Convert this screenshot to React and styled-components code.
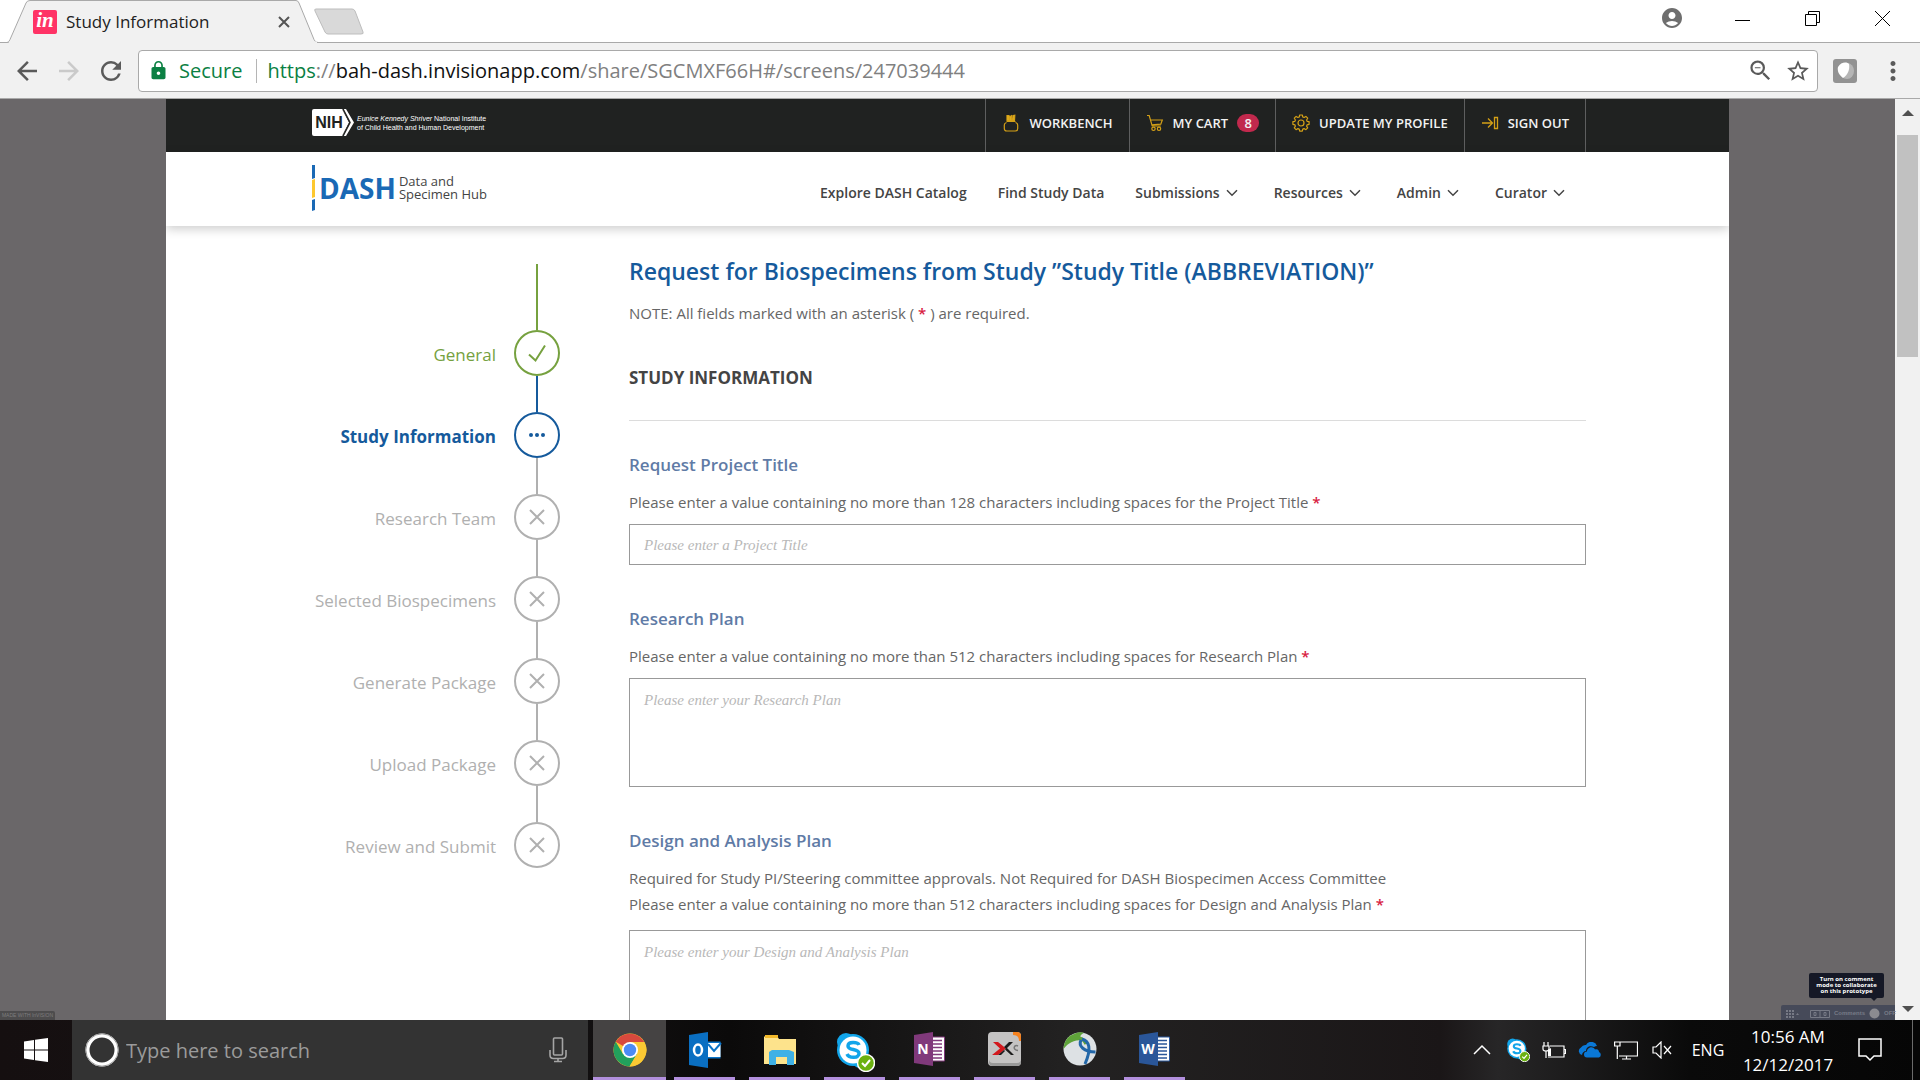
import React, { useState } from 'react';
import styled, { createGlobalStyle } from 'styled-components';
import {
    MdArrowBack,
    MdArrowForward,
    MdRefresh,
    MdLock,
    MdAccountCircle,
    MdZoomOut,
    MdStarBorder,
    MdMoreVert,
} from 'react-icons/md';

const GlobalStyle = createGlobalStyle`
    * {
        box-sizing: border-box;
    }

    body {
        margin: 0;
        font-family: 'Open Sans', 'Noto Sans', sans-serif;
        overflow: hidden;
    }

    button, input, textarea {
        font-family: inherit;
        font-size: inherit;
        color: inherit;
        border: none;
        background: transparent;
        padding: 0;
    }

    a {
        color: inherit;
        text-decoration: none;
    }

    h1, h2, h3, p, ol {
        margin: 0;
        padding: 0;
    }

    svg {
        display: block;
        flex: none;
    }
`;

const Desktop = styled.div`
    display: flex;
    flex-direction: column;
    height: 100vh;
`;

/* ---------- browser ---------- */

const TabStrip = styled.div`
    display: flex;
    justify-content: space-between;
    height: 43px;
    background: #fff;
    border-bottom: 1px solid #a9a9a9;
`;

const Tabs = styled.div`
    display: flex;
    height: 43px;
`;

const Tab = styled.div`
    position: relative;
    z-index: 0;
    display: flex;
    align-items: center;
    width: 314px;
    padding: 0 24px 0 33px;
    font-size: 17px;
    color: #222;
    gap: 9px;
`;

const TabShape = styled.svg`
    position: absolute;
    left: 0;
    top: 0;
    z-index: -1;
`;

const TabTitle = styled.span`
    flex: 1;
    white-space: nowrap;
`;

const Favicon = styled.span`
    width: 24px;
    height: 24px;
    border-radius: 2px;
    background: #ff3366;
    color: #fff;
    font: italic 700 21px/21px 'Liberation Serif', serif;
    text-align: center;
`;

const NewTab = styled.button`
    width: 52px;
    height: 43px;
`;

const WindowButtons = styled.div`
    display: flex;
    height: 42px;
    padding: 0 3px 6px 0;

    button {
        display: flex;
        justify-content: center;
        align-items: center;
        width: 70px;
    }
`;

const Toolbar = styled.div`
    display: flex;
    align-items: center;
    height: 56px;
    padding: 0 12px;
    background: #f1f1f1;
    border-bottom: 1px solid #a9a9a9;
    color: #5a5a5a;
`;

const ToolGroup = styled.div`
    display: flex;
    gap: ${(props) => props.$gap};
`;

const ToolButton = styled.button`
    display: flex;
    justify-content: center;
    align-items: center;
    width: 30px;
    opacity: ${(props) => (props.$dim ? 0.25 : 1)};
`;

const Omnibox = styled.div`
    display: flex;
    align-items: center;
    flex: 1;
    height: 42px;
    margin: 0 12px;
    padding: 0 1px 0 9px;
    border: 1px solid #a9a9a9;
    border-radius: 4px;
    background: #fff;
    font-size: 20px;
    color: #0b8043;
`;

const Secure = styled.span`
    margin-left: 10px;
    padding-right: 14px;
    border-right: 1px solid #b5b5b5;
    line-height: 24px;
`;

const Address = styled.span`
    flex: 1;
    padding-left: 10px;
    color: #808080;
    white-space: nowrap;

    i {
        font-style: normal;
        color: #0b8043;
    }

    b {
        font-weight: 400;
        color: #111;
    }
`;

const OmniButton = styled.button`
    display: flex;
    justify-content: center;
    width: 37px;
    color: #5a5a5a;
`;

const Viewport = styled.div`
    position: relative;
    display: flex;
    flex: 1;
    min-height: 0;
    background: #6a6769;
    overflow: hidden;
`;

const Canvas = styled.div`
    flex: 1;
    min-width: 0;
`;

const Scrollbar = styled.div`
    display: flex;
    flex-direction: column;
    align-items: center;
    width: 25px;
    padding: 11px 0 8px;
    background: #f1f1f1;
`;

const Thumb = styled.div`
    width: 21px;
    height: 222px;
    margin-top: 19px;
    margin-bottom: auto;
    background: #c1c1c1;
`;

/* ---------- DASH page ---------- */

const Page = styled.div`
    width: 100%;
    max-width: 1563px;
    height: 100%;
    margin: 0 auto;
    background: #fff;
    overflow: hidden;
`;

const Inner = styled.div`
    display: flex;
    width: 100%;
    max-width: 1277px;
    margin: 0 auto;
    justify-content: space-between;
`;

const TopBar = styled.header`
    background: #202221;
`;

const NihLogo = styled.a`
    display: flex;
    gap: 3px;
    padding: 10px 0 0 3px;
    color: #fff;
    font: 7px/9px 'Liberation Sans', sans-serif;
    white-space: nowrap;

    span {
        padding-top: 5px;
    }
`;

const TopLinks = styled.nav`
    display: flex;
    border-right: 1px solid #5e5f5f;
`;

const TopLink = styled.a`
    display: flex;
    align-items: center;
    gap: 9px;
    height: 53px;
    padding: 0 16px 6px;
    border-left: 1px solid #5e5f5f;
    font-size: 13px;
    font-weight: 600;
    color: #f2f2f2;
`;

const CartCount = styled.span`
    width: 22px;
    border-radius: 9px;
    background: #c1294d;
    line-height: 18px;
    text-align: center;
`;

const MainBar = styled.div`
    position: relative;
    background: #fff;
    box-shadow: 0 3px 10px rgba(0, 0, 0, 0.2);
`;

const DashLogo = styled.a`
    display: flex;
    align-items: center;
    gap: 3px;
    height: 74px;
    padding: 0 0 3px 3px;
    color: #444;
    font-size: 13px;
    line-height: 13px;

    strong {
        font-size: 28px;
        line-height: 28px;
        color: #1a69b5;
    }
`;

const MainNav = styled.nav`
    display: flex;
    align-items: center;
    gap: 31px;
    padding: 7px 16px 0 0;
`;

const NavLink = styled.a`
    display: flex;
    align-items: center;
    gap: 6px;
    font-size: 14px;
    font-weight: 600;
    color: #444;

    svg {
        margin-right: 5px;
    }
`;

const Content = styled(Inner)`
    gap: 69px;
`;

const Steps = styled.ol`
    width: 251px;
    padding-top: 38px;
    list-style: none;
`;

const stepColors = {
    done: '#76a13f',
    current: '#155a9c',
    todo: '#b0b0b0',
};

const Step = styled.li`
    display: grid;
    grid-template-columns: 1fr 46px;
    column-gap: 18px;
    align-items: center;
    justify-items: center;
    color: ${(props) => stepColors[props.$state]};

    &::before {
        content: '';
        grid-column: 2;
        width: 2px;
        height: ${(props) => (props.$first ? '66px' : '36px')};
        background: currentColor;
    }

    a {
        grid-column: 1;
        justify-self: end;
        padding-top: 2px;
        font-size: 17px;
        font-weight: ${(props) => (props.$state === 'current' ? 700 : 400)};
        white-space: nowrap;
    }
`;

const Form = styled.form`
    flex: 1;
    min-width: 0;
    padding-top: 28px;
`;

const Title = styled.h1`
    font-size: 23px;
    font-weight: 600;
    line-height: 34px;
    color: #155a9c;
`;

const Hint = styled.p`
    font-size: 15px;
    line-height: 26px;
    color: #666;

    em {
        font-style: normal;
        font-weight: 600;
        color: #d8203f;
    }
`;

const Note = styled(Hint)`
    margin-top: 12px;
`;

const SectionTitle = styled.h2`
    margin: 40px 0 32px;
    padding-bottom: 30px;
    border-bottom: 1px solid #dcdcdc;
    font-size: 17px;
    line-height: 24px;
    color: #444;
`;

const Field = styled.div`
    margin-bottom: 42px;

    label {
        display: block;
        margin-bottom: 12px;
        font-size: 17px;
        font-weight: 600;
        line-height: 24px;
        color: #5f7ba6;
    }

    ${Hint} + ${Hint} {
        padding-bottom: 4px;
    }

    input, textarea {
        display: block;
        width: 100%;
        height: 41px;
        margin-top: 9px;
        padding: 2px 14px 0;
        border: 1px solid #999;
        border-radius: 0;
        outline: none;
        resize: none;
        font-family: 'Liberation Serif', serif;
        font-size: 15px;
        color: #444;

        &::placeholder {
            font-style: italic;
            color: #b8b8b8;
        }
    }

    textarea {
        height: 109px;
        padding: 13px 14px;
    }
`;

const MadeWith = styled.div`
    position: absolute;
    left: 0;
    bottom: 0;
    width: 55px;
    border-radius: 0 2px 0 0;
    background: #4d4c4d;
    color: #7f7e7f;
    font: 5px/9px 'Liberation Sans', sans-serif;
    text-align: center;
`;

const Collaborate = styled.div`
    position: absolute;
    right: 25px;
    bottom: 0;
    display: flex;
    flex-direction: column;
    align-items: flex-end;
`;

const Tooltip = styled.div`
    position: relative;
    width: 75px;
    margin: 0 11px 7px 0;
    padding: 3px 4px 4px;
    border-radius: 2px;
    background: #151826;
    color: #fff;
    font: 700 6px/6px 'Open Sans', sans-serif;
    text-align: center;

    &::after {
        content: '';
        position: absolute;
        right: 7px;
        top: 100%;
        border: 3px solid transparent;
        border-top-color: #151826;
    }
`;

const CommentBar = styled.div`
    display: flex;
    align-items: center;
    gap: 4px;
    width: 114px;
    height: 15px;
    padding: 2px 5px 0;
    border-radius: 2px 0 0 0;
    background: #464a59;
    color: #777a86;
    font: 700 6px/9px 'Liberation Sans', sans-serif;
`;

/* ---------- taskbar ---------- */

const Taskbar = styled.footer`
    display: flex;
    height: 60px;
    background: linear-gradient(90deg, #150f10, #171415 25%, #0b0a0a 38%, #232222 56%, #1a1617 75%, #272627 78%, #0a0a0a 88%, #060606);
    color: #fff;
`;

const Start = styled.button`
    display: flex;
    align-items: center;
    width: 72px;
    padding-left: 24px;
`;

const Search = styled.label`
    display: flex;
    align-items: center;
    gap: 7px;
    width: 516px;
    padding: 0 21px 0 13px;
    background: #333;
    font-size: 20px;

    input {
        flex: 1;
        outline: none;
    }

    input::placeholder {
        color: #9b9b9b;
        opacity: 1;
    }
`;

const Apps = styled.div`
    display: flex;
    gap: 2px;
    margin-left: 5px;
`;

const AppButton = styled.button`
    display: flex;
    flex-direction: column;
    align-items: center;
    justify-content: space-between;
    width: 73px;
    padding-top: 12px;
    background: ${(props) => (props.$active ? '#454343' : 'transparent')};

    &::after {
        content: '';
        width: ${(props) => (props.$active ? '73px' : '61px')};
        height: 3px;
        background: #b28fdd;
    }
`;

const Tray = styled.div`
    display: flex;
    align-items: center;
    margin-left: auto;
    padding-right: 7px;
    font-size: 17px;

    button {
        display: flex;
        justify-content: center;
        width: 36px;
    }
`;

const Language = styled.span`
    width: 56px;
    text-align: center;
    font-size: 16px;
`;

const Clock = styled.time`
    width: 104px;
    margin-right: 12px;
    padding-top: 2px;
    line-height: 28px;
    text-align: center;
`;

const ShowDesktop = styled.span`
    width: 1px;
    height: 60px;
    margin-left: 24px;
    background: #6b6b6b;
`;

/* ---------- icons ---------- */

const gold = '#d4a017';

const JarIcon = () => (
    <svg width="18" height="18" viewBox="0 0 18 18" fill="none" stroke={gold} strokeWidth="1.2">
        <path d="M5 1.500h2v5H5zM8 2.500l1.500-.8.5 4.800H8zM11 1.500l1.800-.3-.3 5.300H11z" fill="#e8b923" />
        <path d="M4.500 7.500h9M4.500 8.500C2.800 9 2.300 9.600 2.300 11v3.500c0 1.700.8 2.500 2.500 2.500h8.400c1.700 0 2.500-.8 2.500-2.500V11c0-1.400-.5-2-2.200-2.500" />
    </svg>
);

const CartIcon = () => (
    <svg width="18" height="18" viewBox="0 0 18 18" fill="none" stroke={gold} strokeWidth="1.200">
        <path d="M1 1.500h2.200L6.200 12h8.600M4.500 6h11.800l-1.500 4.200-9 .6" />
        <circle cx="7.500" cy="14.800" r="1.700" />
        <circle cx="13" cy="14.800" r="1.700" />
    </svg>
);

const GearIcon = () => (
    <svg width="18" height="18" viewBox="0 0 18 18" fill="none" stroke={gold} strokeWidth="1.200" strokeLinejoin="round">
        <path d="M7.700 1h2.600l.5 2 1.300.5 1.800-1.100 1.800 1.800-1.100 1.800.5 1.300 2 .4v2.600l-2 .5-.5 1.300 1.100 1.800-1.800 1.800-1.800-1.100-1.300.5-.5 2H7.700l-.5-2-1.300-.5-1.800 1.100-1.800-1.800 1.100-1.800-.5-1.300-2-.5V7.700l2-.4.5-1.300-1.100-1.800 1.800-1.800 1.800 1.100 1.300-.5z" />
        <circle cx="9" cy="9" r="3" />
    </svg>
);

const SignOutIcon = () => (
    <svg width="18" height="18" viewBox="0 0 18 18" fill="none" stroke={gold} strokeWidth="1.300">
        <path d="M1 9h10M7 4.500L11.500 9 7 13.500M13.500 3.500h3v11h-3z" />
    </svg>
);

const Chevron = () => (
    <svg width="12" height="8" viewBox="0 0 12 8" fill="none" stroke="#444" strokeWidth="1.500">
        <path d="M1 1.200l5 5 5-5" />
    </svg>
);

const StepIcon = ({ state }) => (
    <svg width="46" height="46" viewBox="0 0 46 46" fill="none" stroke="currentColor" strokeWidth="2">
        <circle cx="23" cy="23" r="22" />
        {state === 'done' && <path d="M15 24.500l6.500 6L31 15.500" />}
        {state === 'current' && (
            <g fill="currentColor" stroke="none">
                <circle cx="17" cy="23" r="2" />
                <circle cx="23" cy="23" r="2" />
                <circle cx="29" cy="23" r="2" />
            </g>
        )}
        {state === 'todo' && <path d="M16 16l14 14M30 16L16 30" />}
    </svg>
);

const ChromeIcon = () => (
    <svg width="34" height="36" viewBox="0 0 34 36">
        <circle cx="17" cy="18" r="16.500" fill="#fbc933" />
        <path d="M17 18L2.700 9.800A16.500 16.500 0 0 1 31.300 10z" fill="#d8493d" />
        <path d="M2.700 9.800A16.500 16.500 0 0 0 16.500 34.500L24 22 10 22z" fill="#22a05c" />
        <path d="M17 10h14.300A16.500 16.500 0 0 1 16.500 34.500L24 22z" fill="#fbc933" />
        <circle cx="17" cy="18" r="8" fill="#fff" />
        <circle cx="17" cy="18" r="6.200" fill="#4c8bf5" />
    </svg>
);

const iconText = {
    fill: '#fff',
    fontFamily: "'Open Sans', sans-serif",
    fontWeight: 700,
    textAnchor: 'middle',
};

const OutlookIcon = () => (
    <svg width="34" height="36" viewBox="0 0 34 36">
        <path d="M17 9.500h15.500v17H17z" fill="#0a74c9" />
        <path d="M20 11h12.500v14H20z" fill="#fff" />
        <path d="M20 12l6 7 7-8" fill="none" stroke="#0a74c9" strokeWidth="2" />
        <path d="M1 3l19-3v36L1 33z" fill="#0a6fc2" />
        <ellipse cx="10" cy="18" rx="4" ry="5.500" fill="none" stroke="#fff" strokeWidth="2.500" />
    </svg>
);

const FolderIcon = () => (
    <svg width="34" height="36" viewBox="0 0 34 36">
        <path d="M1 5l1-1h12l2 3h17v25H1z" fill="#fde38c" />
        <path d="M2 3h13v3H2z" fill="#f2b92b" />
        <path d="M6 33V20l3-2h17l5 2v13h-7v-8H13v8z" fill="#3fb1e6" />
    </svg>
);

const SkypeIcon = ({ size = 40 }) => (
    <svg width={size} height={size} viewBox="0 0 40 40">
        <circle cx="11" cy="10" r="9" fill="#12a5ea" />
        <circle cx="25" cy="27" r="9" fill="#12a5ea" />
        <circle cx="18" cy="18" r="16" fill="#12a5ea" />
        <circle cx="18" cy="18" r="13.500" fill="#fff" />
        <path d="M24 13c-1-3-11-4-11 1 0 5 11 2 11 7.500 0 5-10 5-12 .5" fill="none" stroke="#12a5ea" strokeWidth="3.500" />
        <circle cx="31" cy="31" r="8.500" fill="#6bb110" stroke="#fff" strokeWidth="1.500" />
        <path d="M27 31l3 3 5-6" fill="none" stroke="#fff" strokeWidth="2" />
    </svg>
);

const OfficeIcon = ({ letter, color }) => (
    <svg width="34" height="36" viewBox="0 0 34 36">
        <path d="M18 5h13.500v24H18z" fill="#fff" stroke={color} />
        <path d="M20 8.500h9M20 12h9M20 15.500h9M20 19h9M20 22.500h9M20 26h9" stroke={color} strokeWidth="1.600" />
        <path d="M1 3l19-3v34L1 31z" fill={color} />
        <text x="10" y="22" fontSize="14" {...iconText}>{letter}</text>
    </svg>
);

const XcIcon = () => (
    <svg width="34" height="36" viewBox="0 0 34 36">
        <rect x="0" y="0" width="33" height="34" rx="4" fill="#c4c3c3" />
        <path d="M1 30q0 4 4 4h24q4 0 4-4v-3q0 4-4 4H5q-4 0-4-4z" fill="#999" />
        <path d="M25 0h4a4 4 0 0 1 4 4v5h-2c0-4-2-6-6-6z" fill="#f58220" />
        <path d="M5 10h5l8 6.500L10 23H4l8-6.500z" fill="#d3181d" />
        <path d="M25 10h-4l-5 5 2 2zM17 17.500l6 5.500h3l-7-7zM10 23h3l4-4-1-1z" fill="#1b1b1b" />
        <path d="M30 14c-4-2-6 4 0 4.500" fill="none" stroke="#777" strokeWidth="1.500" />
    </svg>
);

const AnyConnectIcon = () => (
    <svg width="34" height="36" viewBox="0 0 34 36">
        <circle cx="17" cy="17" r="16.500" fill="#dde1e4" />
        <path d="M.5 17C1 9 5 4 11 2c4-2 8-2 10-1-5 2-4 5-2 7-8 0-14 3-18.500 9z" fill="#5fa33a" />
        <path d="M13 7c4-3 8 1 10 5" fill="none" stroke="#5fa33a" strokeWidth="3" />
        <path d="M18 8c-3 6 3 12 14.500 12M19 7c7 2 10 9 3 25" fill="none" stroke="#2367a8" strokeWidth="3" />
    </svg>
);

/* ---------- data ---------- */

const steps = [
    { label: 'General', state: 'done' },
    { label: 'Study Information', state: 'current' },
    { label: 'Research Team', state: 'todo' },
    { label: 'Selected Biospecimens', state: 'todo' },
    { label: 'Generate Package', state: 'todo' },
    { label: 'Upload Package', state: 'todo' },
    { label: 'Review and Submit', state: 'todo' },
];

const navItems = [
    { label: 'Explore DASH Catalog' },
    { label: 'Find Study Data' },
    { label: 'Submissions', menu: true },
    { label: 'Resources', menu: true },
    { label: 'Admin', menu: true },
    { label: 'Curator', menu: true },
];

const fields = [
    {
        name: 'title',
        label: 'Request Project Title',
        hints: ['Please enter a value containing no more than 128 characters including spaces for the Project Title'],
        placeholder: 'Please enter a Project Title',
    },
    {
        name: 'plan',
        label: 'Research Plan',
        hints: ['Please enter a value containing no more than 512 characters including spaces for Research Plan'],
        placeholder: 'Please enter your Research Plan',
        long: true,
    },
    {
        name: 'design',
        label: 'Design and Analysis Plan',
        hints: [
            'Required for Study PI/Steering committee approvals. Not Required for DASH Biospecimen Access Committee',
            'Please enter a value containing no more than 512 characters including spaces for Design and Analysis Plan',
        ],
        placeholder: 'Please enter your Design and Analysis Plan',
        long: true,
    },
];

const apps = [
    { name: 'Chrome', icon: <ChromeIcon />, active: true },
    { name: 'Outlook', icon: <OutlookIcon /> },
    { name: 'File Explorer', icon: <FolderIcon /> },
    { name: 'Skype', icon: <SkypeIcon /> },
    { name: 'OneNote', icon: <OfficeIcon letter="N" color="#80397b" /> },
    { name: 'Xc', icon: <XcIcon /> },
    { name: 'AnyConnect', icon: <AnyConnectIcon /> },
    { name: 'Word', icon: <OfficeIcon letter="W" color="#2a5699" /> },
];

/* ---------- components ---------- */

const BrowserChrome = () => (
    <>
        <TabStrip>
            <Tabs>
                <Tab>
                    <TabShape width="320" height="43" viewBox="0 0 320 43">
                        <path d="M0 42.500H7q2 0 3-3L26 3q1-2.500 4-2.500H296q2 0 3 2.500L314 39.500q1 3 4 3" fill="#f1f1f1" stroke="#a9a9a9" />
                        <path d="M9 42.500h308" stroke="#f1f1f1" strokeWidth="2" />
                    </TabShape>
                    <Favicon>in</Favicon>
                    <TabTitle>Study Information</TabTitle>
                    <button aria-label="Close tab">
                        <svg width="12" height="12" viewBox="0 0 12 12" stroke="#555" strokeWidth="2">
                            <path d="M1 1l10 10M11 1L1 11" />
                        </svg>
                    </button>
                </Tab>
                <NewTab aria-label="New tab">
                    <svg width="52" height="28" viewBox="0 0 52 28">
                        <path d="M2 1h36q2 0 3 2l8 21q1 2-2 2H14q-2 0-3-2L1 3q-1-2 1-2z" fill="#d9d9d9" stroke="#bdbdbd" />
                    </svg>
                </NewTab>
            </Tabs>
            <WindowButtons>
                <button aria-label="Account"><MdAccountCircle size={24} color="#6e6e6e" /></button>
                <button aria-label="Minimize">
                    <svg width="15" height="15" viewBox="0 0 15 15" stroke="#000"><path d="M0 9.500h15" /></svg>
                </button>
                <button aria-label="Restore">
                    <svg width="15" height="15" viewBox="0 0 15 15" fill="none" stroke="#000"><path d="M.5 3.500h11v11H.5zM3.500 3.500v-3h11v11h-3" /></svg>
                </button>
                <button aria-label="Close">
                    <svg width="15" height="15" viewBox="0 0 15 15" stroke="#000"><path d="M0 0l15 15M15 0L0 15" /></svg>
                </button>
            </WindowButtons>
        </TabStrip>
        <Toolbar>
            <ToolGroup $gap="12px">
                <ToolButton aria-label="Back"><MdArrowBack size={30} /></ToolButton>
                <ToolButton aria-label="Forward" $dim><MdArrowForward size={30} /></ToolButton>
                <ToolButton aria-label="Reload"><MdRefresh size={30} /></ToolButton>
            </ToolGroup>
            <Omnibox>
                <MdLock size={21} />
                <Secure>Secure</Secure>
                <Address>
                    <i>https</i>://<b>bah-dash.invisionapp.com</b>/share/SGCMXF66H#/screens/247039444
                </Address>
                <OmniButton aria-label="Zoom"><MdZoomOut size={27} /></OmniButton>
                <OmniButton aria-label="Bookmark"><MdStarBorder size={26} /></OmniButton>
            </Omnibox>
            <ToolGroup $gap="18px">
                <ToolButton aria-label="Extension">
                    <svg width="24" height="24" viewBox="0 0 24 24">
                        <rect width="24" height="24" rx="3" fill="#929292" />
                        <ellipse cx="14" cy="12" rx="7" ry="8" fill="#b5b5b5" />
                        <path d="M5 8c3-6 10-5 11-3 1 5-1 11-6 14-4-3-6-7-5-11z" fill="#fff" />
                    </svg>
                </ToolButton>
                <ToolButton aria-label="Menu"><MdMoreVert size={30} /></ToolButton>
            </ToolGroup>
        </Toolbar>
    </>
);

const SiteHeader = () => (
    <>
        <TopBar>
            <Inner>
                <NihLogo href="#nih">
                    <svg width="42" height="27" viewBox="0 0 42 27">
                        <path d="M2 0h28l7 13.500L30 27H2q-2 0-2-2V2q0-2 2-2z" fill="#fff" />
                        <path d="M30 0h4l8 13.500L34 27h-4l8-13.500z" fill="#fff" />
                        <path d="M31 0l7 13.500L31 27" fill="none" stroke="#202221" strokeWidth="1.500" />
                        <text x="17" y="19" fontSize="16" fontWeight="700" fill="#202221" textAnchor="middle" fontFamily="'Liberation Sans', sans-serif">NIH</text>
                    </svg>
                    <span>
                        <i>Eunice Kennedy Shriver</i> National Institute<br />
                        of Child Health and Human Development
                    </span>
                </NihLogo>
                <TopLinks>
                    <TopLink href="#workbench"><JarIcon />WORKBENCH</TopLink>
                    <TopLink href="#cart"><CartIcon />MY CART<CartCount>8</CartCount></TopLink>
                    <TopLink href="#profile"><GearIcon />UPDATE MY PROFILE</TopLink>
                    <TopLink href="#signout"><SignOutIcon />SIGN OUT</TopLink>
                </TopLinks>
            </Inner>
        </TopBar>
        <MainBar>
            <Inner>
                <DashLogo href="#home">
                    <svg width="4" height="46" viewBox="0 0 4 46">
                        <path d="M0 0h3v13l-3 1z" fill="#1a69b5" />
                        <path d="M0 15l3-1v18l-3 1z" fill="#fdc82f" />
                        <path d="M0 35l3-1v11l-3 1z" fill="#1a69b5" />
                    </svg>
                    <strong>DASH</strong>
                    <span>Data and<br />Specimen Hub</span>
                </DashLogo>
                <MainNav>
                    {navItems.map((item) => (
                        <NavLink key={item.label} href="#nav">
                            {item.label}
                            {item.menu && <Chevron />}
                        </NavLink>
                    ))}
                </MainNav>
            </Inner>
        </MainBar>
    </>
);

const RequestForm = () => {
    const [inputState, setInputState] = useState({ title: '', plan: '', design: '' });

    const handleInput = (name) => (e) => {
        setInputState({ ...inputState, [name]: e.target.value });
    };

    return (
        <Form>
            <Title>Request for Biospecimens from Study ”Study Title (ABBREVIATION)”</Title>
            <Note>NOTE: All fields marked with an asterisk ( <em>*</em> ) are required.</Note>
            <SectionTitle>STUDY INFORMATION</SectionTitle>
            {fields.map(({ name, label, hints, placeholder, long }) => {
                const Control = long ? 'textarea' : 'input';
                return (
                    <Field key={name}>
                        <label htmlFor={name}>{label}</label>
                        {hints.map((hint, i) => (
                            <Hint key={hint}>
                                {hint} {i === hints.length - 1 && <em>*</em>}
                            </Hint>
                        ))}
                        <Control
                            id={name}
                            value={inputState[name]}
                            placeholder={placeholder}
                            onChange={handleInput(name)}
                        />
                    </Field>
                );
            })}
        </Form>
    );
};

const WindowsTaskbar = () => (
    <Taskbar>
        <Start aria-label="Start">
            <svg width="24" height="24" viewBox="0 0 24 24" fill="#fff">
                <path d="M0 3.400L10 2v9.500H0zM11 1.800L24 0v11.500H11zM0 12.500h10V22L0 20.600zM11 12.500h13V24l-13-1.800z" />
            </svg>
        </Start>
        <Search>
            <svg width="34" height="34" viewBox="0 0 34 34" fill="none">
                <circle cx="17" cy="17" r="14.500" stroke="#fff" strokeWidth="4" />
                <circle cx="17" cy="17" r="16.200" stroke="#999" />
            </svg>
            <input type="text" placeholder="Type here to search" aria-label="Search" />
            <svg width="18" height="26" viewBox="0 0 18 26" fill="none" stroke="#a5a5a5" strokeWidth="1.600">
                <rect x="4.500" y="1" width="9" height="17" rx="1" />
                <path d="M1 13v5q0 3.500 3.500 3.500h9q3.500 0 3.500-3.500v-5M9 21.500v3M5 24.500h8" />
            </svg>
        </Search>
        <Apps>
            {apps.map((app) => (
                <AppButton key={app.name} $active={app.active} aria-label={app.name}>
                    {app.icon}
                </AppButton>
            ))}
        </Apps>
        <Tray>
            <button aria-label="Show hidden icons">
                <svg width="18" height="12" viewBox="0 0 18 12" fill="none" stroke="#fff" strokeWidth="1.500"><path d="M1 10l8-8 8 8" /></svg>
            </button>
            <button aria-label="Skype status"><SkypeIcon size={24} /></button>
            <button aria-label="Battery">
                <svg width="24" height="18" viewBox="0 0 24 18" fill="none" stroke="#fff" strokeWidth="1.200">
                    <path d="M8 5h14v11H6M22 8.500h1.500v4H22M2 1v4M6 1v4M1 5h6v3q0 2-3 2t-3-2zM4 10v7" />
                    <path d="M6 15V9l3-2v8z" fill="#fff" stroke="none" />
                </svg>
            </button>
            <button aria-label="OneDrive">
                <svg width="24" height="16" viewBox="0 0 24 16" fill="#0a78d7">
                    <path d="M4 13a4 4 0 0 1-1-7.500A5 5 0 0 1 8 3a6 6 0 0 1 11 1 5 5 0 0 0-3 1c-4-2-8 0-8 4-2 0-4 2-4 4z" />
                    <path d="M9 15.500a3 3 0 0 1 0-6c0-4 6-6 8-2 3-1 4 1 4 2.500a3 3 0 0 1 0 5.500z" />
                </svg>
            </button>
            <button aria-label="Network">
                <svg width="24" height="19" viewBox="0 0 24 19" fill="none" stroke="#fff" strokeWidth="1.200">
                    <path d="M6 1h17.500v14H5M8 18h9M12.500 15v3M.6 1H6v4H.6zM3.300 5v13" />
                </svg>
            </button>
            <button aria-label="Volume muted">
                <svg width="20" height="18" viewBox="0 0 20 18" fill="none" stroke="#fff" strokeWidth="1.200">
                    <path d="M1 6h3l5-5v16l-5-5H1zM12 5l7 8M19 5l-7 8" />
                </svg>
            </button>
            <Language>ENG</Language>
            <Clock>10:56 AM<br />12/12/2017</Clock>
            <button aria-label="Notifications">
                <svg width="24" height="24" viewBox="0 0 24 24" fill="none" stroke="#fff" strokeWidth="1.500">
                    <path d="M1 1h22v17h-7l-4 4-4-4H1z" />
                </svg>
            </button>
            <ShowDesktop />
        </Tray>
    </Taskbar>
);

const App = () => (
    <Desktop>
        <GlobalStyle />
        <BrowserChrome />
        <Viewport>
            <Canvas>
                <Page>
                    <SiteHeader />
                    <Content as="main">
                        <Steps>
                            {steps.map(({ label, state }, i) => (
                                <Step key={label} $state={state} $first={i === 0}>
                                    <a href="#step">{label}</a>
                                    <StepIcon state={state} />
                                </Step>
                            ))}
                        </Steps>
                        <RequestForm />
                    </Content>
                </Page>
            </Canvas>
            <Scrollbar>
                <svg width="12" height="6" viewBox="0 0 12 6" fill="#505050"><path d="M0 6l6-6 6 6z" /></svg>
                <Thumb />
                <svg width="12" height="6" viewBox="0 0 12 6" fill="#505050"><path d="M0 0l6 6 6-6z" /></svg>
            </Scrollbar>
            <MadeWith>MADE WITH InVISION</MadeWith>
            <Collaborate>
                <Tooltip>Turn on comment mode to collaborate on this prototype</Tooltip>
                <CommentBar>
                    <svg width="14" height="8" viewBox="0 0 14 8" fill="currentColor">
                        <path d="M0 0h2v2H0zM3 0h2v2H3zM6 0h2v2H6zM0 3h2v2H0zM3 3h2v2H3zM6 3h2v2H6zM0 6h2v2H0zM3 6h2v2H3zM6 6h2v2H6zM10 5l1.500-2L13 5z" />
                    </svg>
                    <svg width="26" height="8" viewBox="0 0 26 8" fill="none" stroke="currentColor">
                        <path d="M6.500.5h19v7h-19zM16 .5v7M10 2.500h2v3h-2zM20 2.500h2v3h-2z" />
                    </svg>
                    <span>Comments</span>
                    <svg width="11" height="11" viewBox="0 0 11 11" fill="#8b8b90"><circle cx="5.500" cy="5.500" r="5" /></svg>
                    <span>OFF</span>
                </CommentBar>
            </Collaborate>
        </Viewport>
        <WindowsTaskbar />
    </Desktop>
);

export default App;
